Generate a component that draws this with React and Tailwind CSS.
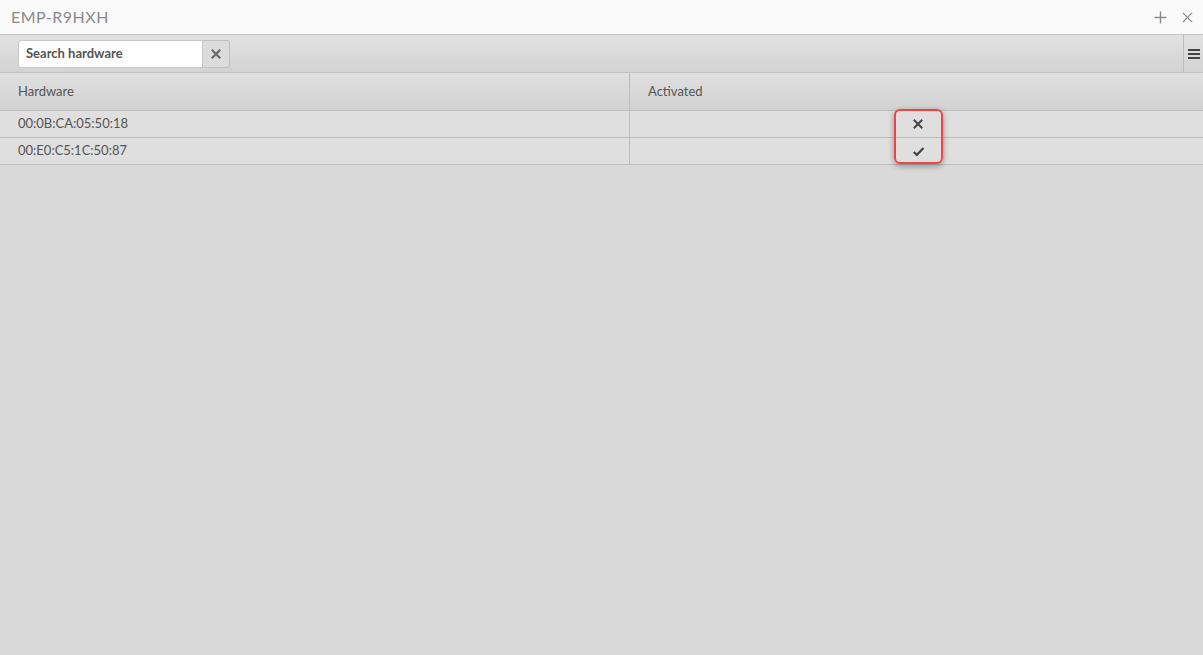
import { useState } from 'react';

const rows = [
  { mac: '00:0B:CA:05:50:18', active: false },
  { mac: '00:E0:C5:1C:50:87', active: true },
];

function XIcon({ className }) {
  return (
    <svg viewBox="0 0 12 12" className={className} fill="none" stroke="currentColor" strokeWidth="2" strokeLinecap="square">
      <path d="M2.5 2.5l7 7M9.5 2.5l-7 7" />
    </svg>
  );
}

function CheckIcon({ className }) {
  return (
    <svg viewBox="0 0 12 12" className={className} fill="none" stroke="currentColor" strokeWidth="2">
      <path d="M1.6 6.4l2.9 2.7L10.6 2.8" />
    </svg>
  );
}

export default function App() {
  const [query, setQuery] = useState('');

  return (
    <div className="flex h-[655px] w-[1203px] flex-col overflow-hidden bg-[#d9d9d9] font-['Lato',sans-serif] text-[13px] text-[#555]">
      {/* title bar */}
      <div className="flex h-[35px] shrink-0 items-center justify-between border-b border-[#c4c4c4] bg-[#fafafa] pl-[11px] pr-[10px]">
        <span className="text-[16px] font-normal tracking-[0.5px] text-[#8a8a8a]">EMP-R9HXH</span>
        <div className="flex items-center gap-[15px] text-[#8a8a8a]">
          <svg viewBox="0 0 12 12" className="h-[13px] w-[13px]" stroke="currentColor" strokeWidth="1.3">
            <path d="M6 0.5v11M0.5 6h11" />
          </svg>
          <svg viewBox="0 0 12 12" className="h-[11px] w-[11px]" stroke="currentColor" strokeWidth="1.3">
            <path d="M1 1l10 10M11 1L1 11" />
          </svg>
        </div>
      </div>

      {/* toolbar */}
      <div className="flex h-[38px] shrink-0 items-stretch border-b border-[#c2c2c2] bg-gradient-to-b from-[#e2e2e2] to-[#d3d3d3]">
        <div className="flex flex-1 items-center pl-[18px]">
          <div className="flex h-[28px] items-stretch">
            <input
              value={query}
              onChange={(e) => setQuery(e.target.value)}
              placeholder="Search hardware"
              className="w-[185px] rounded-l-[3px] border border-[#c8c8c8] bg-white px-[7px] text-[13px] font-bold text-[#555] outline-none placeholder:text-[#555]"
            />
            <button className="flex w-[27px] items-center justify-center rounded-r-[3px] border border-l-0 border-[#c0c0c0] bg-[#dcdcdc] text-[#666]">
              <XIcon className="h-[12px] w-[12px]" />
            </button>
          </div>
        </div>
        <div className="flex w-[20px] items-center justify-center border-l border-[#bdbdbd]">
          <svg viewBox="0 0 12 10" className="h-[10px] w-[12px]" fill="#444">
            <rect x="0" y="0" width="12" height="2" />
            <rect x="0" y="4" width="12" height="2" />
            <rect x="0" y="8" width="12" height="2" />
          </svg>
        </div>
      </div>

      {/* table */}
      <div className="relative">
        <div className="flex h-[38px] border-b border-[#bdbdbd] bg-gradient-to-b from-[#e0e0e0] to-[#d2d2d2] text-[13px] text-[#555]">
          <div className="flex w-[630px] items-center border-r border-[#bdbdbd] pl-[18px]">Hardware</div>
          <div className="flex flex-1 items-center pl-[18px]">Activated</div>
        </div>
        {rows.map((r) => (
          <div key={r.mac} className="flex h-[27px] border-b border-[#bdbdbd] bg-[#dfdfdf]">
            <div className="flex w-[630px] items-center border-r border-[#bdbdbd] pl-[18px]">{r.mac}</div>
            <div className="flex flex-1 items-center justify-center pl-[3px] text-[#444]">
              {r.active ? <CheckIcon className="h-[13px] w-[13px]" /> : <XIcon className="h-[12px] w-[12px]" />}
            </div>
          </div>
        ))}

        {/* highlight annotation */}
        <div className="absolute left-[894px] top-[36px] h-[55px] w-[49px] rounded-[6px] border-[2px] border-[#ef4444] shadow-[0_2px_6px_rgba(0,0,0,0.35)]" />
      </div>
    </div>
  );
}
